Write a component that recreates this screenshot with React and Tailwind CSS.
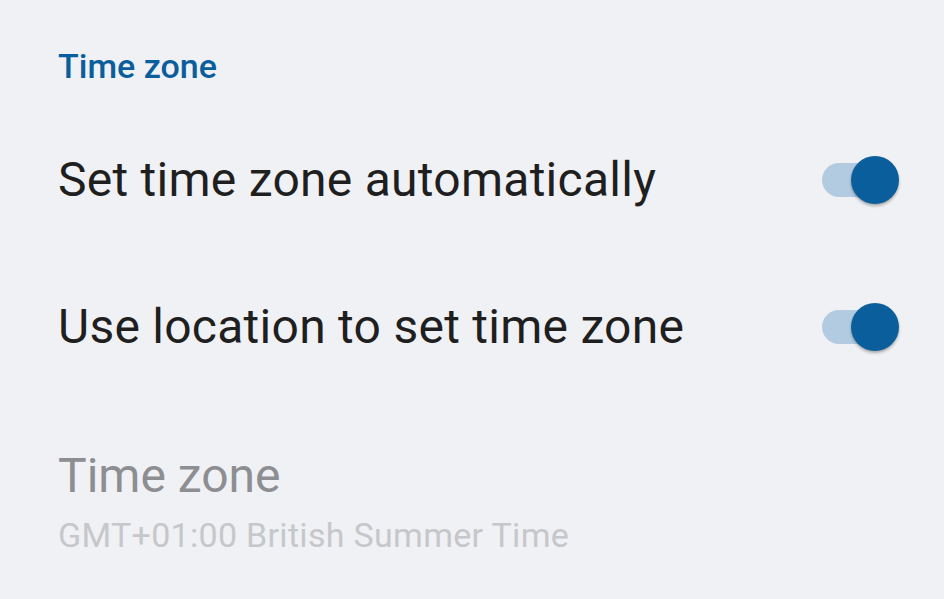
import React from "react";

function Toggle() {
  return (
    <div className="relative w-[80px] h-[48px] flex items-center shrink-0">
      <div className="ml-[1px] w-[58px] h-[34px] rounded-full bg-[#b3cbe0]" />
      <div className="absolute right-[2px] top-0 w-[48px] h-[48px] rounded-full bg-[#0b5e9c] shadow-[0_2px_3px_rgba(0,0,0,0.3)]" />
    </div>
  );
}

export default function App() {
  return (
    <div className="w-[944px] h-[599px] bg-[#f0f1f4] overflow-hidden" style={{ fontFamily: "Roboto, 'Open Sans', sans-serif" }}>
      <div className="pl-[58px] pr-[43px] pt-[49px]">
        <div className="text-[34px] leading-[34px] font-medium text-[#0b5e9c]">Time zone</div>
        <div className="mt-[73px] flex items-center justify-between h-[48px]">
          <span className="text-[48px] leading-[48px] tracking-[0.26px] text-[#1f1f1f]">Set time zone automatically</span>
          <Toggle />
        </div>
        <div className="mt-[99px] flex items-center justify-between h-[48px]">
          <span className="text-[48px] leading-[48px] tracking-[0.26px] text-[#1f1f1f]">Use location to set time zone</span>
          <Toggle />
        </div>
        <div className="mt-[101px] text-[48px] leading-[48px] text-[#8d8e92]">Time zone</div>
        <div className="mt-[18px] text-[34px] leading-[34px] tracking-[0.3px] text-[#c6c7ca]">GMT+01:00 British Summer Time</div>
      </div>
    </div>
  );
}
